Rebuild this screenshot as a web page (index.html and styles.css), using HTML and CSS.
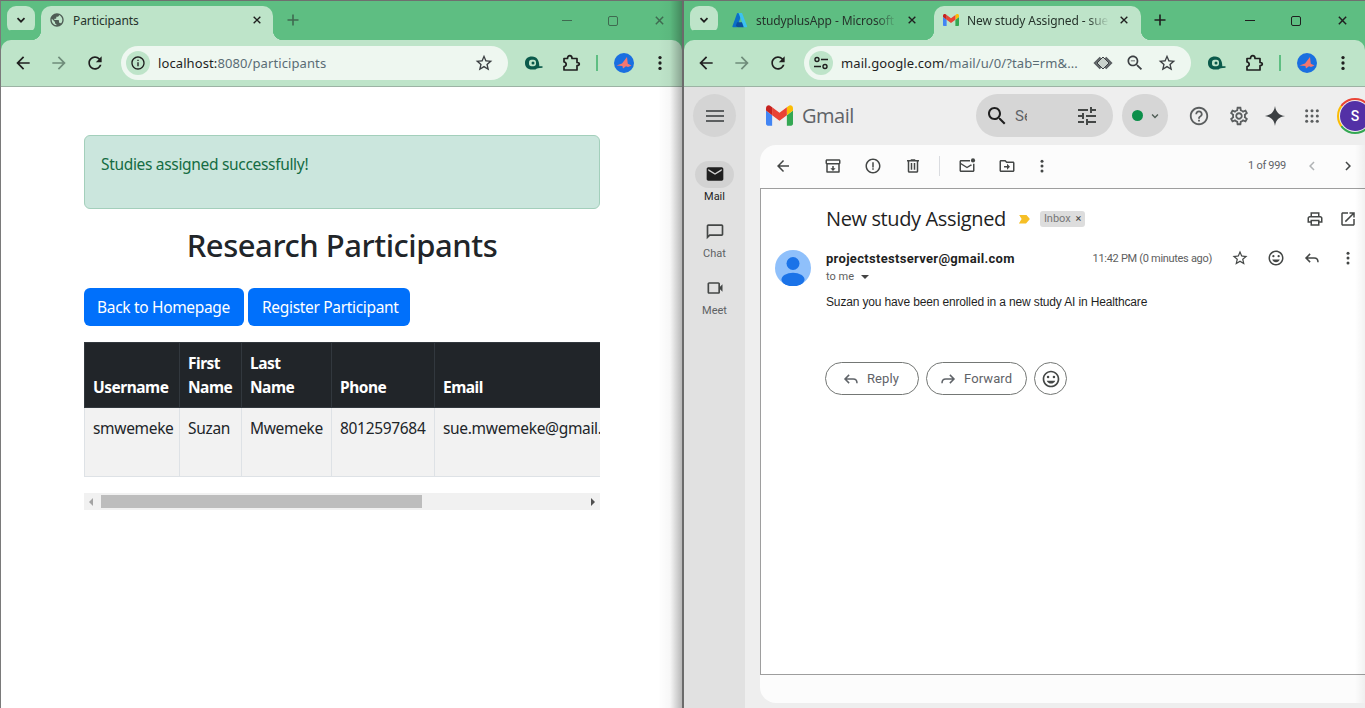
FILE: index.html
```html
<!DOCTYPE html>
<html lang="en">
<head>
<meta charset="utf-8">
<title>Participants</title>
<link rel="stylesheet" href="styles.css">
</head>
<body>
<svg class="sprite" xmlns="http://www.w3.org/2000/svg">
  <symbol id="back" viewBox="0 0 24 24"><path d="M20 11H7.83l5.59-5.59L12 4l-8 8 8 8 1.41-1.41L7.83 13H20v-2z"/></symbol>
  <symbol id="forward" viewBox="0 0 24 24"><path d="M12 4l-1.41 1.41L16.17 11H4v2h12.17l-5.58 5.59L12 20l8-8z"/></symbol>
  <symbol id="refresh" viewBox="0 0 24 24"><path d="M17.65 6.35C16.2 4.9 14.21 4 12 4c-4.42 0-7.99 3.58-7.99 8s3.57 8 7.99 8c3.73 0 6.84-2.55 7.73-6h-2.08c-.82 2.33-3.04 4-5.65 4-3.31 0-6-2.69-6-6s2.69-6 6-6c1.66 0 3.14.69 4.22 1.78L13 11h7V4l-2.35 2.35z"/></symbol>
  <symbol id="star" viewBox="0 0 24 24"><path d="M22 9.24l-7.19-.62L12 2 9.19 8.63 2 9.24l5.46 4.73L5.82 21 12 17.27 18.18 21l-1.63-7.03L22 9.24zM12 15.4l-3.76 2.27 1-4.28-3.32-2.88 4.38-.38L12 6.1l1.71 4.04 4.38.38-3.32 2.88 1 4.28L12 15.4z"/></symbol>
  <symbol id="vert" viewBox="0 0 24 24"><circle cx="12" cy="5.5" r="2"/><circle cx="12" cy="12" r="2"/><circle cx="12" cy="18.5" r="2"/></symbol>
  <symbol id="chev" viewBox="0 0 12 12"><path d="M2.5 4.2L6 7.7l3.5-3.5" fill="none" stroke="currentColor" stroke-width="1.7"/></symbol>
  <symbol id="x" viewBox="0 0 12 12"><path d="M2 2l8 8M10 2l-8 8" fill="none" stroke="currentColor" stroke-width="1.6"/></symbol>
  <symbol id="plus" viewBox="0 0 12 12"><path d="M6 .5v11M.5 6h11" fill="none" stroke="currentColor" stroke-width="1.6"/></symbol>
  <symbol id="globe" viewBox="0 0 24 24"><path d="M12 2C6.48 2 2 6.48 2 12s4.48 10 10 10 10-4.48 10-10S17.52 2 12 2zm-1 17.93c-3.95-.49-7-3.85-7-7.93 0-.62.08-1.21.21-1.79L9 15v1c0 1.1.9 2 2 2v1.93zm6.9-2.54c-.26-.81-1-1.39-1.9-1.39h-1v-3c0-.55-.45-1-1-1H8v-2h2c.55 0 1-.45 1-1V7h2c1.1 0 2-.9 2-2v-.41c2.93 1.19 5 4.06 5 7.41 0 2.08-.8 3.97-2.1 5.39z"/></symbol>
  <symbol id="info" viewBox="0 0 24 24"><path d="M11 7h2v2h-2zm0 4h2v6h-2zm1-9C6.48 2 2 6.48 2 12s4.48 10 10 10 10-4.48 10-10S17.52 2 12 2zm0 18c-4.41 0-8-3.59-8-8s3.59-8 8-8 8 3.59 8 8-3.59 8-8 8z"/></symbol>
  <symbol id="sitetune" viewBox="0 0 16 16"><g fill="none" stroke="currentColor" stroke-width="1.4"><circle cx="4" cy="4.5" r="2"/><path d="M8 4.5h7M1 11.5h7"/><circle cx="12" cy="11.5" r="2"/></g></symbol>
  <symbol id="ext" viewBox="0 0 20 20"><path fill="#0b5a4b" d="M8 3.500C3.500 3.500 1 6 1 10s2.500 6.500 7 6.500h3.500c1-1.300 3-1.500 7-1.700v-1.600h-3.200C15.300 7.500 13 3.500 8 3.500z"/><rect x="5" y="6.800" width="7" height="6.400" rx="2.600" fill="#bee4c9"/><circle cx="9" cy="10" r="1.500" fill="#0b5a4b"/></symbol>
  <symbol id="puzzle" viewBox="0 0 20 20"><path d="M3 5.500h3.500c0-1.800 1-2.800 2.300-2.800s2.200 1 2.200 2.800H16v4c1.700 0 2.300.7 2.300 1.600s-.6 1.600-2.300 1.600V17H3v-3.500c1.500-.2 2.200-1 2.200-2.200S4.500 9.200 3 9z" fill="none" stroke="#1f1f1f" stroke-width="1.700" stroke-linejoin="round"/></symbol>
  <symbol id="bird" viewBox="0 0 20 20"><circle cx="10" cy="10" r="10" fill="#1a6fe0"/><path fill="#f5766e" d="M2.500 12.500l5.500-2 5-6.500.8 6.800 3.700 1.700-3.500 1.600-2-.9-3 2.300-.6-2.600z"/></symbol>
  <symbol id="diamond" viewBox="0 0 20 20"><path fill="none" stroke="#5a5f62" stroke-width="2.200" d="M7.500 4.500L2 10l5.500 5.500M12.500 4.500L18 10l-5.500 5.500"/><path fill="#c9d2cc" stroke="#3c4043" stroke-width="1" d="M10 4l6 6-6 6-6-6z"/></symbol>
  <symbol id="zoomout" viewBox="0 0 24 24"><path d="M15.500 14h-.79l-.28-.27C15.410 12.590 16 11.110 16 9.500 16 5.910 13.090 3 9.500 3S3 5.910 3 9.500 5.910 16 9.500 16c1.610 0 3.090-.59 4.230-1.570l.27.28v.79l5 4.990L20.490 19l-4.990-5zm-6 0C7.010 14 5 11.990 5 9.500S7.010 5 9.500 5 14 7.010 14 9.500 11.990 14 9.500 14zM7 9h5v1H7z"/></symbol>
  <symbol id="search" viewBox="0 0 24 24"><path d="M15.500 14h-.79l-.28-.27C15.410 12.590 16 11.110 16 9.500 16 5.910 13.090 3 9.500 3S3 5.910 3 9.500 5.910 16 9.500 16c1.610 0 3.090-.59 4.230-1.570l.27.28v.79l5 4.990L20.490 19l-4.990-5zm-6 0C7.010 14 5 11.990 5 9.500S7.010 5 9.500 5 14 7.010 14 9.500 11.990 14 9.500 14z"/></symbol>
  <symbol id="tune" viewBox="0 0 24 24"><path d="M3 17v2h6v-2H3zM3 5v2h10V5H3zm10 16v-2h8v-2h-8v-2h-2v6h2zM7 9v2H3v2h4v2h2V9H7zm14 4v-2H11v2h10zm-6-4h2V7h4V5h-4V3h-2v6z"/></symbol>
  <symbol id="help" viewBox="0 0 24 24"><path d="M11 18h2v-2h-2v2zm1-16C6.480 2 2 6.480 2 12s4.480 10 10 10 10-4.480 10-10S17.520 2 12 2zm0 18c-4.410 0-8-3.590-8-8s3.590-8 8-8 8 3.590 8 8-3.590 8-8 8zm0-14c-2.210 0-4 1.790-4 4h2c0-1.100.9-2 2-2s2 .9 2 2c0 2-3 1.750-3 5h2c0-2.250 3-2.500 3-5 0-2.210-1.790-4-4-4z"/></symbol>
  <symbol id="settings" viewBox="0 0 24 24"><path d="M19.430 12.980c.04-.32.07-.64.07-.98 0-.34-.03-.66-.07-.98l2.110-1.650c.19-.15.24-.42.12-.64l-2-3.460c-.09-.16-.26-.25-.44-.25-.06 0-.12.01-.17.03l-2.490 1c-.52-.4-1.080-.73-1.690-.98l-.38-2.650C14.460 2.180 14.250 2 14 2h-4c-.25 0-.46.18-.49.42l-.38 2.650c-.61.25-1.170.59-1.690.98l-2.490-1c-.06-.02-.12-.03-.18-.03-.17 0-.34.09-.43.25l-2 3.460c-.13.22-.07.49.12.64l2.110 1.650c-.04.32-.07.65-.07.98 0 .33.03.66.07.98l-2.110 1.650c-.19.15-.24.42-.12.64l2 3.460c.09.16.26.25.44.25.06 0 .12-.01.17-.03l2.490-1c.52.4 1.080.73 1.690.98l.38 2.650c.03.24.24.42.49.42h4c.25 0 .46-.18.49-.42l.38-2.650c.61-.25 1.170-.59 1.690-.98l2.490 1c.06.02.12.03.18.03.17 0 .34-.09.43-.25l2-3.460c.12-.22.07-.49-.12-.64l-2.110-1.650zm-1.980-1.710c.04.31.05.52.05.73 0 .21-.02.43-.05.73l-.14 1.130.89.7 1.080.84-.7 1.210-1.270-.51-1.040-.42-.9.68c-.43.32-.84.56-1.250.73l-1.060.43-.16 1.130-.2 1.350h-1.400l-.19-1.350-.16-1.130-1.060-.43c-.43-.18-.83-.41-1.230-.71l-.91-.7-1.060.43-1.270.51-.7-1.210 1.080-.84.89-.7-.14-1.130c-.03-.31-.05-.54-.05-.74s.02-.43.05-.73l.14-1.130-.89-.7-1.080-.84.7-1.210 1.270.51 1.040.42.9-.68c.43-.32.84-.56 1.250-.73l1.060-.43.16-1.130.2-1.350h1.390l.19 1.350.16 1.130 1.060.43c.43.18.83.41 1.230.71l.91.7 1.060-.43 1.270-.51.7 1.210-1.070.85-.89.7.14 1.130zM12 8c-2.210 0-4 1.790-4 4s1.790 4 4 4 4-1.790 4-4-1.790-4-4-4zm0 6c-1.100 0-2-.9-2-2s.9-2 2-2 2 .9 2 2-.9 2-2 2z"/></symbol>
  <symbol id="spark" viewBox="0 0 24 24"><path d="M12 1c.8 6.500 4.500 10.200 11 11-6.500.8-10.200 4.500-11 11-.8-6.500-4.500-10.200-11-11 6.500-.8 10.200-4.500 11-11z"/></symbol>
  <symbol id="apps" viewBox="0 0 18 18"><circle cx="3" cy="3" r="1.700"/><circle cx="9" cy="3" r="1.700"/><circle cx="15" cy="3" r="1.700"/><circle cx="3" cy="9" r="1.700"/><circle cx="9" cy="9" r="1.700"/><circle cx="15" cy="9" r="1.700"/><circle cx="3" cy="15" r="1.700"/><circle cx="9" cy="15" r="1.700"/><circle cx="15" cy="15" r="1.700"/></symbol>
  <symbol id="menu" viewBox="0 0 24 24"><path d="M3 18h18v-2H3v2zm0-5h18v-2H3v2zm0-7v2h18V6H3z"/></symbol>
  <symbol id="mail" viewBox="0 0 24 24"><path d="M20 4H4c-1.100 0-2 .9-2 2v12c0 1.100.9 2 2 2h16c1.100 0 2-.9 2-2V6c0-1.100-.9-2-2-2zm0 4l-8 5-8-5V6l8 5 8-5v2z"/></symbol>
  <symbol id="chat" viewBox="0 0 24 24"><path d="M20 4H4c-1.100 0-2 .9-2 2v16l4-4h14c1.100 0 2-.9 2-2V6c0-1.100-.9-2-2-2zm0 12H5.200L4 17.200V6h16v10z"/></symbol>
  <symbol id="meet" viewBox="0 0 24 24"><path d="M18 10.500V7c0-1.100-.9-2-2-2H5c-1.100 0-2 .9-2 2v10c0 1.100.9 2 2 2h11c1.100 0 2-.9 2-2v-3.500l3 3v-9l-3 3zM16 17H5V7h11v10z"/></symbol>
  <symbol id="archive" viewBox="0 0 24 24"><path d="M20 3H4c-1.100 0-2 .9-2 2v3c0 .7.400 1.300 1 1.700V20c0 .6.500 1 1 1h16c.5 0 1-.4 1-1V9.700c.6-.4 1-1 1-1.700V5c0-1.100-.9-2-2-2zM4 5h16v3H4V5zm1 14V10h14v9H5zm8-7h-2v3H8.500l3.500 3.500 3.500-3.500H13v-3z"/></symbol>
  <symbol id="report" viewBox="0 0 24 24"><path d="M11 7h2v7h-2zm0 8h2v2h-2zm1-13C6.480 2 2 6.480 2 12s4.480 10 10 10 10-4.480 10-10S17.520 2 12 2zm0 18c-4.410 0-8-3.590-8-8s3.590-8 8-8 8 3.590 8 8-3.590 8-8 8z"/></symbol>
  <symbol id="trash" viewBox="0 0 24 24"><path d="M15 4V3H9v1H4v2h1v13c0 1.100.9 2 2 2h10c1.100 0 2-.9 2-2V6h1V4h-5zm2 15H7V6h10v13zM9 8h2v9H9zm4 0h2v9h-2z"/></symbol>
  <symbol id="unread" viewBox="0 0 24 24"><path d="M22 8.900V18c0 1.100-.9 2-2 2H4c-1.100 0-2-.9-2-2V6c0-1.100.9-2 2-2h12v2H4v2l8 5 5.300-3.300 1.400 1.200L12 15 4 10v8h16V8.900z"/><circle cx="20" cy="4.500" r="2.800"/></symbol>
  <symbol id="move" viewBox="0 0 24 24"><path d="M20 6h-8l-2-2H4c-1.100 0-2 .9-2 2v12c0 1.100.9 2 2 2h16c1.100 0 2-.9 2-2V8c0-1.100-.9-2-2-2zm0 12H4V6h5.200l2 2H20v10zm-8-1l4-4-4-4v3H8v2h4v3z"/></symbol>
  <symbol id="prev" viewBox="0 0 24 24"><path d="M15.410 7.410L14 6l-6 6 6 6 1.410-1.410L10.830 12z"/></symbol>
  <symbol id="next" viewBox="0 0 24 24"><path d="M8.590 16.590L10 18l6-6-6-6-1.410 1.410L13.170 12z"/></symbol>
  <symbol id="print" viewBox="0 0 24 24"><path d="M19 8h-1V3H6v5H5c-1.660 0-3 1.340-3 3v6h4v4h12v-4h4v-6c0-1.660-1.340-3-3-3zM8 5h8v3H8V5zm8 12v2H8v-4h8v2zm2-2v-2H6v2H4v-4c0-.55.45-1 1-1h14c.55 0 1 .45 1 1v4h-2z"/></symbol>
  <symbol id="open" viewBox="0 0 24 24"><path d="M19 19H5V5h7V3H5c-1.110 0-2 .9-2 2v14c0 1.100.89 2 2 2h14c1.100 0 2-.9 2-2v-7h-2v7zM14 3v2h3.590l-9.830 9.830 1.410 1.410L19 6.410V10h2V3h-7z"/></symbol>
  <symbol id="mood" viewBox="0 0 24 24"><path d="M12 2C6.480 2 2 6.480 2 12s4.480 10 10 10 10-4.480 10-10S17.520 2 12 2zm0 18c-4.410 0-8-3.590-8-8s3.590-8 8-8 8 3.590 8 8-3.590 8-8 8z"/><circle cx="8.500" cy="9.500" r="1.500"/><circle cx="15.500" cy="9.500" r="1.500"/><path d="M12 17.500c2.300 0 4.300-1.400 5.100-3.500H6.900c.8 2.100 2.800 3.500 5.100 3.500z"/></symbol>
  <symbol id="reply" viewBox="0 0 24 24"><path d="M9.500 6.500L4 12l5.500 5.500M4.500 12H15c3 0 5 2 5 5.500" fill="none" stroke="currentColor" stroke-width="2"/></symbol>
  <symbol id="fwd" viewBox="0 0 24 24"><path d="M14.500 6.500L20 12l-5.500 5.500M19.500 12H9c-3 0-5 2-5 5.500" fill="none" stroke="currentColor" stroke-width="2"/></symbol>
  <symbol id="gmailm" viewBox="0 0 24 24"><path fill="#4285f4" d="M1.636 21h3.819V11.730L0 7.640v11.730C0 20.270.732 21 1.636 21z"/><path fill="#34a853" d="M18.545 21h3.819c.905 0 1.636-.73 1.636-1.640V7.640l-5.455 4.090z"/><path fill="#fbbc04" d="M18.545 4.640v7.090L24 7.640V5.450c0-2.020-2.310-3.180-3.930-1.960z"/><path fill="#ea4335" d="M5.455 11.730V4.640L12 9.550l6.545-4.910v7.090L12 16.640z"/><path fill="#c5221f" d="M0 5.450v2.190l5.455 4.090V4.640L3.930 3.490C2.310 2.270 0 3.430 0 5.450z"/></symbol>
  <symbol id="azure" viewBox="0 0 18 18"><path fill="#0a6fc8" d="M6.500 1h4.800L6 16.500a1 1 0 0 1-.9.6H1.300a.9.9 0 0 1-.8-1.200L5.600 1.600A.9.9 0 0 1 6.500 1z"/><path fill="#0b4f9e" d="M13.500 11.500H5.800l-1.500 4 2 1.600h7.500z"/><path fill="#3cc1f0" d="M11.300 1l5.700 14.900a.9.9 0 0 1-.8 1.200h-4.100a.9.900 0 0 0 .8-1.200L7.600 1.600A.9.900 0 0 0 6.800 1z"/></symbol>
  <symbol id="user" viewBox="0 0 36 36"><circle cx="18" cy="18" r="18" fill="#8fc0fb"/><circle cx="18" cy="13.500" r="6.500" fill="#1b73e8"/><ellipse cx="18" cy="29.500" rx="11.500" ry="6.800" fill="#1b73e8"/></symbol>
</svg>

<div class="desktop">
  <section class="window win-left">
    <div class="tabstrip">
      <button class="tab-search"><svg class="i12"><use href="#chev"/></svg></button>
      <div class="tab tab-on tab-left">
        <svg class="i16 tab-fav grey"><use href="#globe"/></svg>
        <span class="tab-title">Participants</span>
        <svg class="i10 tab-x"><use href="#x"/></svg>
      </div>
      <svg class="i12 new-tab muted"><use href="#plus"/></svg>
      <div class="win-ctl muted">
        <span class="ctl ctl-min"></span>
        <span class="ctl ctl-max"></span>
        <svg class="ctl-x"><use href="#x"/></svg>
      </div>
    </div>
    <div class="toolbar">
      <span class="tb"><svg class="i20"><use href="#back"/></svg></span>
      <span class="tb faint"><svg class="i20"><use href="#forward"/></svg></span>
      <span class="tb"><svg class="i20"><use href="#refresh"/></svg></span>
      <div class="omni">
        <span class="site"><svg class="i16"><use href="#info"/></svg></span>
        <span class="url"><b>localhost:</b>8080/participants</span>
        <span class="omni-end"><svg class="i20"><use href="#star"/></svg></span>
      </div>
      <span class="tb tb-ext"><svg class="i20"><use href="#ext"/></svg></span>
      <span class="tb tb-puz"><svg class="i20"><use href="#puzzle"/></svg></span>
      <span class="tb-div"></span>
      <span class="tb"><svg class="i20"><use href="#bird"/></svg></span>
      <span class="tb"><svg class="i20"><use href="#vert"/></svg></span>
    </div>
    <main class="page">
      <div class="alert">Studies assigned successfully!</div>
      <h1>Research Participants</h1>
      <div class="btns">
        <a class="btn">Back to Homepage</a>
        <a class="btn">Register Participant</a>
      </div>
      <div class="tbl-wrap">
        <table class="tbl">
          <colgroup><col class="c1"><col class="c2"><col class="c3"><col class="c4"><col class="c5"></colgroup>
          <thead><tr><th>Username</th><th>First Name</th><th>Last Name</th><th>Phone</th><th>Email</th></tr></thead>
          <tbody><tr><td>smwemeke</td><td>Suzan</td><td>Mwemeke</td><td>8012597684</td><td>sue.mwemeke@gmail.com</td></tr></tbody>
        </table>
      </div>
      <div class="hscroll">
        <span class="arr arr-l"></span>
        <span class="thumb"></span>
        <span class="arr arr-r"></span>
      </div>
    </main>
    <div class="edge-shadow"></div>
  </section>

  <section class="window win-right">
    <div class="tabstrip">
      <button class="tab-search"><svg class="i12"><use href="#chev"/></svg></button>
      <div class="tab tab-off">
        <svg class="i16 tab-fav"><use href="#azure"/></svg>
        <span class="tab-title fade">studyplusApp - Microsoft Azure</span>
        <svg class="i10 tab-x"><use href="#x"/></svg>
      </div>
      <div class="tab tab-on tab-gm">
        <svg class="i16 tab-fav"><use href="#gmailm"/></svg>
        <span class="tab-title fade">New study Assigned - sue.mwemeke</span>
        <svg class="i10 tab-x"><use href="#x"/></svg>
      </div>
      <svg class="i12 new-tab"><use href="#plus"/></svg>
      <div class="win-ctl win-ctl-r">
        <span class="ctl ctl-min"></span>
        <span class="ctl ctl-max"></span>
        <svg class="ctl-x"><use href="#x"/></svg>
      </div>
    </div>
    <div class="toolbar">
      <span class="tb"><svg class="i20"><use href="#back"/></svg></span>
      <span class="tb faint"><svg class="i20"><use href="#forward"/></svg></span>
      <span class="tb"><svg class="i20"><use href="#refresh"/></svg></span>
      <div class="omni">
        <span class="site"><svg class="i16"><use href="#sitetune"/></svg></span>
        <span class="url"><b>mail.google.com</b>/mail/u/0/?tab=rm&amp;...</span>
        <span class="omni-end omni-3"><svg class="i20"><use href="#diamond"/></svg></span>
        <span class="omni-end omni-3"><svg class="i20"><use href="#zoomout"/></svg></span>
        <span class="omni-end omni-3"><svg class="i20"><use href="#star"/></svg></span>
      </div>
      <span class="tb tb-ext"><svg class="i20"><use href="#ext"/></svg></span>
      <span class="tb tb-puz"><svg class="i20"><use href="#puzzle"/></svg></span>
      <span class="tb-div"></span>
      <span class="tb"><svg class="i20"><use href="#bird"/></svg></span>
      <span class="tb"><svg class="i20"><use href="#vert"/></svg></span>
    </div>
    <div class="gmail">
      <nav class="rail">
        <span class="burger"><svg class="i24"><use href="#menu"/></svg></span>
        <div class="rail-item rail-on"><span class="pill"><svg class="i20"><use href="#mail"/></svg></span><span class="rail-lbl">Mail</span></div>
        <div class="rail-item"><span class="pill"><svg class="i20"><use href="#chat"/></svg></span><span class="rail-lbl">Chat</span></div>
        <div class="rail-item"><span class="pill"><svg class="i20"><use href="#meet"/></svg></span><span class="rail-lbl">Meet</span></div>
      </nav>
      <div class="gm-main">
        <header class="gm-head">
          <div class="brand"><svg class="gm-logo"><use href="#gmailm"/></svg><span class="wordmark">Gmail</span></div>
          <div class="gm-search">
            <svg class="i24"><use href="#search"/></svg>
            <span class="q">Search mail</span>
            <svg class="i24 q-tune"><use href="#tune"/></svg>
          </div>
          <div class="gm-status"><span class="dot"></span><svg class="i10 grey"><use href="#chev"/></svg></div>
          <span class="hd hd-help"><svg class="i22"><use href="#help"/></svg></span>
          <span class="hd"><svg class="i22"><use href="#settings"/></svg></span>
          <span class="hd hd-spark"><svg class="i22"><use href="#spark"/></svg></span>
          <span class="hd hd-apps"><svg class="i16"><use href="#apps"/></svg></span>
          <span class="ring"><span class="initial">S</span></span>
        </header>
        <div class="panel">
          <div class="gm-bar">
            <span class="sl"><svg class="i18"><use href="#back"/></svg></span>
            <span class="sl sl-first"><svg class="i18"><use href="#archive"/></svg></span>
            <span class="sl"><svg class="i18"><use href="#report"/></svg></span>
            <span class="sl"><svg class="i18"><use href="#trash"/></svg></span>
            <span class="bar-div"></span>
            <span class="sl sl-mark"><svg class="i18"><use href="#unread"/></svg></span>
            <span class="sl sl-move"><svg class="i18"><use href="#move"/></svg></span>
            <span class="sl sl-more"><svg class="i18"><use href="#vert"/></svg></span>
            <span class="count">1 of 999</span>
            <span class="sl sl36 lite"><svg class="i18"><use href="#prev"/></svg></span>
            <span class="sl sl36"><svg class="i18"><use href="#next"/></svg></span>
          </div>
          <article class="msg">
            <div class="subj-row">
              <h2 class="subj">New study Assigned</h2>
              <span class="marker"></span>
              <span class="chip">Inbox <span class="chip-x">×</span></span>
              <span class="sl sl-print"><svg class="i18"><use href="#print"/></svg></span>
              <span class="sl sl36"><svg class="i18"><use href="#open"/></svg></span>
            </div>
            <div class="msg-grid">
              <svg class="avatar"><use href="#user"/></svg>
              <div class="msg-body">
                <div class="from-row">
                  <span class="from">projectstestserver@gmail.com</span>
                  <span class="when">11:42 PM (0 minutes ago)</span>
                  <span class="sl sl36"><svg class="i18"><use href="#star"/></svg></span>
                  <span class="sl sl36"><svg class="i18"><use href="#mood"/></svg></span>
                  <span class="sl sl36"><svg class="i18"><use href="#reply"/></svg></span>
                  <span class="sl sl36"><svg class="i18"><use href="#vert"/></svg></span>
                </div>
                <div class="to">to me <span class="caret"></span></div>
                <p class="text">Suzan you have been enrolled in a new study AI in Healthcare</p>
                <div class="acts">
                  <a class="act act-reply"><svg class="i18"><use href="#reply"/></svg>Reply</a>
                  <a class="act act-fwd"><svg class="i18"><use href="#fwd"/></svg>Forward</a>
                  <a class="act-smile"><svg class="i20"><use href="#mood"/></svg></a>
                </div>
              </div>
            </div>
          </article>
          <div class="panel-foot"></div>
        </div>
      </div>
    </div>
  </section>
</div>
</body>
</html>
```

FILE: styles.css
```css
* { box-sizing: border-box; }
html, body { margin: 0; padding: 0; height: 100%; overflow: hidden; background: #fff; }
.sprite { display: none; }
svg { fill: currentColor; flex-shrink: 0; display: block; }
.i10 { width: 10px; height: 10px; }
.i12 { width: 12px; height: 12px; }
.i16 { width: 16px; height: 16px; }
.i18 { width: 18px; height: 18px; }
.i20 { width: 20px; height: 20px; }
.i22 { width: 22px; height: 22px; }
.i24 { width: 24px; height: 24px; }
.grey { color: #4f5d55; }
.muted { color: #3f6a50; }

.desktop { display: flex; width: 1365px; height: 708px; overflow: hidden; font-family: "Noto Sans", sans-serif; color: #1f1f1f; }
.window { position: relative; display: flex; flex-direction: column; height: 708px; overflow: hidden; background: #fff; border-top: 1px solid #6f6f6f; }
.win-left { width: 683px; border-left: 1px solid #7a7a7a; border-right: 1px solid #6b6b6b; flex-shrink: 0; }
.win-right { width: 682px; border-left: 1px solid #6b6b6b; flex-shrink: 0; }

/* tab strip */
.tabstrip { display: flex; align-items: flex-end; height: 39px; background: #5ebe82; flex-shrink: 0; }
.tab-search { width: 28px; height: 28px; margin: 0 0 6px 6px; padding: 0; border: 0; border-radius: 9px; background: #bee4c9; color: #1f1f1f; display: flex; align-items: center; justify-content: center; }
.tab { position: relative; display: flex; align-items: center; height: 34px; padding: 0 0 6px 8px; border-radius: 10px 10px 0 0; font-size: 12px; flex-shrink: 0; }
.tab-on { background: #bee4c9; }
.tab-on::before, .tab-on::after { content: ""; position: absolute; bottom: 0; width: 10px; height: 10px; }
.tab-on::before { left: -10px; background: radial-gradient(circle at 0 0, transparent 10px, #bee4c9 10.5px); }
.tab-on::after { right: -10px; background: radial-gradient(circle at 100% 0, transparent 10px, #bee4c9 10.5px); }
.tab-left { width: 232px; margin-left: 6px; }
.tab-off { width: 210px; margin-left: 6px; background: transparent; }
.tab-off .tab-x { margin-right: 17px; }
.tab-gm { width: 207px; padding-left: 9px; }
.tab-gm .tab-x { margin-right: 12px; }
.tab-fav { margin-right: 8px; }
.tab-title { flex: 1; white-space: nowrap; overflow: hidden; letter-spacing: -.1px; color: #26332b; }
.fade { -webkit-mask-image: linear-gradient(90deg, #000 85%, transparent); mask-image: linear-gradient(90deg, #000 85%, transparent); }
.tab-x { margin: 0 11px 0 10px; color: #1f1f1f; }
.new-tab { margin: 0 0 14px 14px; }
.tab-gm + .new-tab { margin-left: 13px; }
.win-ctl { margin-left: auto; display: flex; align-items: center; height: 39px; align-self: flex-start; width: 134px; color: #3f6a50; }
.win-ctl-r { color: #1f1f1f; }
.ctl { display: block; }
.ctl-min { width: 10px; height: 1px; background: currentColor; margin: 0 0 0 14px; }
.ctl-max { width: 10px; height: 10px; border: 1px solid currentColor; border-radius: 2px; margin-left: 36px; }
.ctl-x { width: 11px; height: 11px; margin-left: 36px; }

/* toolbar */
.toolbar { display: flex; align-items: center; height: 47px; background: #bee4c9; border-radius: 10px 10px 0 0; border-bottom: 1px solid #9cb3a4; box-shadow: 0 -10px 0 #5ebe82; flex-shrink: 0; padding: 0 0 0 4px; color: #1f1f1f; }
.tb { width: 36px; height: 36px; display: flex; align-items: center; justify-content: center; flex-shrink: 0; }
.faint { color: #6f8c7a; }
.omni { display: flex; align-items: center; width: 387px; height: 34px; margin-left: 8px; border-radius: 17px; background: #eef7f0; padding-left: 5px; flex-shrink: 0; }
.site { width: 24px; height: 24px; border-radius: 50%; background: #bee4c9; display: flex; align-items: center; justify-content: center; margin-right: 8px; flex-shrink: 0; }
.url { flex: 1; font-size: 13px; color: #5a6c75; white-space: nowrap; overflow: hidden; letter-spacing: .1px; }
.url b { font-weight: 400; color: #1f1f1f; }
.omni-end { width: 36px; margin-right: 6px; display: flex; justify-content: center; color: #3c4043; }
.omni-3 { width: 32px; margin-right: 0; }
.omni-3:last-child { margin-right: 8px; }
.tb-ext { margin-left: 8px; }
.tb-puz { width: 37px; }
.tb-div { width: 2px; height: 16px; background: #5ebe82; margin: 0 8px 0 7px; flex-shrink: 0; }

/* left page */
.page { flex: 1; padding: 48px 0 0 83px; width: 600px; font-size: 15.5px; line-height: 24px; color: #212529; letter-spacing: -.32px; }
.alert { width: 516px; height: 74px; padding: 16px; background: #cbe6dd; border: 1px solid #a3cfbb; border-radius: 6px; color: #146c43; margin-bottom: 16px; }
h1 { width: 516px; margin: 0 0 23px; font-size: 31px; line-height: 40px; font-weight: 500; text-align: center; letter-spacing: -.45px; }
.btns { display: flex; gap: 4px; margin-bottom: 16px; }
.btn { display: block; width: 160px; height: 38px; padding: 7px 0 0 13px; border-radius: 6px; background: #0070fb; color: #fff; white-space: nowrap; }
.btn + .btn { width: 162px; padding-left: 14px; }
.tbl-wrap { width: 516px; overflow: hidden; }
.tbl { border-collapse: collapse; table-layout: fixed; width: 860px; }
.c1 { width: 95px; } .c2 { width: 62px; } .c3 { width: 90px; } .c4 { width: 103px; } .c5 { width: 510px; }
.tbl th { background: #212529; color: #fff; font-weight: 700; text-align: left; vertical-align: bottom; padding: 8px; border: 1px solid #32383e; height: 65px; letter-spacing: -.5px; }
.tbl td { background: #f2f2f2; padding: 8px; border: 1px solid #dee2e6; vertical-align: top; height: 69px; white-space: nowrap; }
.hscroll { display: flex; align-items: center; width: 516px; height: 17px; margin-top: 16px; background: #f1f1f1; }
.thumb { display: block; width: 321px; height: 13px; margin-left: 8px; background: #bdbdbd; }
.arr { display: block; width: 0; height: 0; border-style: solid; border-color: transparent; }
.arr-l { margin-left: 5px; border-width: 4px 4px 4px 0; border-right-color: #a3a3a3; }
.arr-r { margin-left: auto; margin-right: 5px; border-width: 4px 0 4px 4px; border-left-color: #505050; }
.edge-shadow { position: absolute; top: 0; right: 0; bottom: 0; width: 24px; pointer-events: none; background: linear-gradient(90deg, rgba(0,0,0,0), rgba(0,0,0,.03) 50%, rgba(0,0,0,.28)); }

/* gmail */
.gmail { flex: 1; display: flex; min-height: 0; background: #eeeeee; font-family: Roboto, "Liberation Sans", sans-serif; color: #444746; }
.rail { width: 61px; flex-shrink: 0; background: #e1e1e1; padding-top: 7px; display: flex; flex-direction: column; align-items: center; }
.burger { width: 43px; height: 43px; border-radius: 50%; background: #d4d4d4; display: flex; align-items: center; justify-content: center; color: #5c5f60; margin-bottom: 24px; flex-shrink: 0; }
.rail-item { display: flex; flex-direction: column; align-items: center; height: 57px; flex-shrink: 0; width: 100%; }
.pill { width: 39px; height: 27px; padding-bottom: 2px; border-radius: 14px; display: flex; align-items: center; justify-content: center; }
.rail-on .pill { background: #d2d2d2; color: #1f1f1f; }
.rail-lbl { font-size: 11px; line-height: 16px; padding-top: 1px; color: #5e6164; }
.rail-on .rail-lbl { color: #1f1f1f; }
.gm-main { flex: 1; min-width: 0; display: flex; flex-direction: column; overflow: hidden; }
.gm-head { display: flex; align-items: center; height: 58px; padding: 7px 0 8px 21px; flex-shrink: 0; }
.brand { display: flex; align-items: center; width: 210px; flex-shrink: 0; }
.gm-logo { width: 27px; height: 27px; margin-right: 9px; }
.wordmark { font-family: "Open Sans", sans-serif; font-size: 20px; color: #5f6368; letter-spacing: -.5px; }
.gm-search { display: flex; align-items: center; width: 137px; height: 43px; border-radius: 22px; background: #d6d6d6; padding-left: 9px; flex-shrink: 0; color: #1f1f1f; }
.q { width: 12px; margin-left: 6px; overflow: hidden; white-space: nowrap; font-size: 15px; color: #5f6368; }
.q-tune { margin-left: 48px; color: #444746; }
.gm-status { display: flex; align-items: center; width: 46px; height: 43px; margin-left: 9px; border-radius: 22px; background: #d6d6d6; padding-left: 10px; gap: 7px; flex-shrink: 0; }
.dot { width: 11px; height: 11px; border-radius: 50%; background: #0c8f4a; }
.hd { width: 40px; display: flex; justify-content: center; flex-shrink: 0; color: #5b5e5f; }
.hd-help { margin-left: 11px; }
.hd-spark { width: 32px; color: #3c4043; }
.hd-apps { width: 42px; }
.ring { width: 36px; height: 36px; margin-left: 4px; border-radius: 50%; flex-shrink: 0; display: flex; align-items: center; justify-content: center; background: conic-gradient(#ea4335 0 35%, #34a853 35% 65%, #fbbc04 65% 85%, #ea4335 85%); }
.initial { width: 30px; height: 30px; border-radius: 50%; background: #5330a6; color: #fff; font-size: 14px; font-weight: 500; line-height: 30px; text-align: center; box-shadow: 0 0 0 1px #eee; }
.panel { flex: 1; min-height: 0; margin: 0 0 5px 15px; border-radius: 16px 0 0 16px; background: #fcfcfc; display: flex; flex-direction: column; position: relative; }
.panel::after { content: ""; position: absolute; top: 0; right: 0; bottom: 0; width: 10px; background: linear-gradient(90deg, rgba(0,0,0,0), rgba(0,0,0,.05)); pointer-events: none; }
.gm-bar { display: flex; align-items: center; height: 43px; padding: 0 0 2px 3px; margin-right: -1px; flex-shrink: 0; }
.sl { width: 40px; display: flex; justify-content: center; flex-shrink: 0; color: #444746; }
.sl36 { width: 36px; }
.sl-first { margin-left: 10px; }
.bar-div { width: 1px; height: 20px; background: #dadce0; margin: 0 7px 0 6px; }
.sl-move { width: 39px; }
.sl-more { width: 32px; }
.count { margin-left: auto; margin-right: 8px; font-size: 11px; color: #5f6368; letter-spacing: -.3px; }
.lite { color: #b0b3b5; }
.msg { flex: 1; min-height: 0; background: #fff; border: 1px solid #9e9e9e; border-right: 0; padding-top: 16px; }
.subj-row { display: flex; align-items: center; height: 28px; padding-left: 65px; margin-right: -1px; }
.subj { margin: 0; padding-bottom: 2px; font-family: "Open Sans", sans-serif; font-size: 20px; font-weight: 400; color: #1f1f1f; letter-spacing: -.38px; }
.marker { width: 11px; height: 9px; margin-left: 13px; background: #f6bf26; clip-path: polygon(0 0, 65% 0, 100% 50%, 65% 100%, 0 100%, 25% 50%); }
.chip { height: 16px; margin-left: 10px; padding: 0 4px; border-radius: 3px; background: #dddddd; color: #777; font-size: 11px; line-height: 16px; }
.chip-x { margin-left: 2px; color: #444; }
.sl-print { width: 31px; margin-left: auto; }
.msg-grid { display: flex; margin-top: 16px; padding-left: 14px; }
.avatar { width: 36px; height: 36px; margin: 1px 15px 0 0; }
.msg-body { flex: 1; min-width: 0; }
.from-row { display: flex; align-items: center; height: 18px; margin-right: -1px; }
.from { font-size: 13px; font-weight: 700; color: #1f1f1f; letter-spacing: .31px; }
.when { margin-left: auto; margin-right: 10px; font-size: 11px; color: #5e5e5e; letter-spacing: -.3px; }
.to { padding-top: 1px; font-size: 11px; line-height: 18px; color: #5e5e5e; }
.caret { display: inline-block; width: 0; height: 0; margin: 0 0 1px 4px; border-style: solid; border-width: 4px 4px 0; border-color: #444 transparent transparent; }
.text { margin: 8px 0 0; font-family: "Liberation Sans", sans-serif; font-size: 12px; line-height: 16px; color: #1f1f1f; letter-spacing: -.15px; }
.acts { display: flex; gap: 7px; margin: 52px 0 0 -1px; }
.act { display: flex; align-items: center; height: 33px; border: 1px solid #747775; border-radius: 17px; font-size: 13px; font-weight: 400; letter-spacing: .1px; color: #5f6368; }
.act svg { margin: 0 7px 0 0; }
.act-reply { width: 94px; padding-left: 16px; }
.act-fwd { width: 101px; padding-left: 12px; }
.act-smile { width: 33px; height: 33px; border: 1px solid #747775; border-radius: 50%; display: flex; align-items: center; justify-content: center; }
.panel-foot { height: 28px; flex-shrink: 0; }
```
